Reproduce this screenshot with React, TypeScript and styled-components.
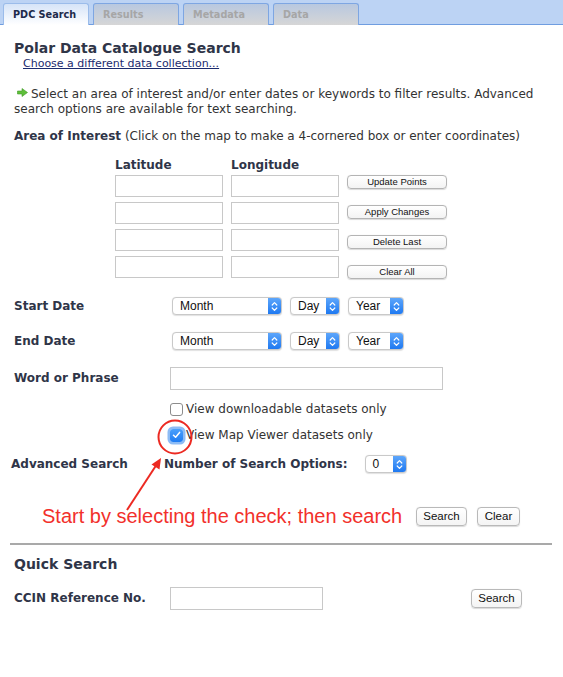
import React from "react";
import styled, { createGlobalStyle, css } from "styled-components";

const Global = createGlobalStyle`
  html, body { margin: 0; padding: 0; background: #fff; }
  body { font-family: "DejaVu Sans", Verdana, sans-serif; color: #333; }
  * { box-sizing: border-box; }
`;

const Page = styled.div`
  width: 563px;
  height: 677px;
  position: relative;
  overflow: hidden;
  background: #fff;
`;

const TabBar = styled.div`
  height: 25px;
  background: #bcd3f4;
  border-bottom: 1px solid #6f9de0;
  display: flex;
  align-items: flex-end;
  gap: 4px;
  padding-left: 3px;
`;

const Tab = styled.div<{ $active?: boolean }>`
  width: 86px;
  height: 22px;
  margin-bottom: -1px;
  border: 1px solid #7ea6e2;
  border-bottom: none;
  border-radius: 3px 3px 0 0;
  font-size: 9.7px;
  font-weight: bold;
  display: flex;
  align-items: center;
  padding-left: 9px;
  ${(p) =>
    p.$active
      ? css`
          background: linear-gradient(#d6e4f8, #ffffff);
          color: #1d2a4a;
          border-color: #9bbcea;
        `
      : css`
          background: linear-gradient(#b8c8e0, #d6d6d6);
          color: #a6a6a6;
        `}
`;

const Content = styled.div`
  padding: 0 0 0 14px;
  position: relative;
`;

const Title = styled.h1`
  margin: 14px 0 0 0;
  font-size: 14px;
  line-height: 18px;
  font-weight: bold;
  color: #2f3548;
`;

const Link = styled.a`
  display: block;
  margin-left: 9px;
  font-size: 11px;
  line-height: 14px;
  color: #1b2b6e;
  text-decoration: underline;
`;

const Intro = styled.p`
  margin: 16px 0 0 0;
  font-size: 12px;
  line-height: 15px;
  color: #333;
  padding-right: 10px;
`;

const GreenArrow = styled.svg`
  width: 11px;
  height: 9px;
  margin: 0 3px 0 3px;
  vertical-align: 1px;
`;

const AreaLine = styled.div`
  margin-top: 12px;
  font-size: 12px;
  line-height: 15px;
  color: #333;
`;

const Bold = styled.b`
  color: #2f3548;
`;

const AreaBlock = styled.div`
  margin: 21px 0 0 101px;
  display: flex;
  gap: 8px;
`;

const CoordCol = styled.div`
  display: flex;
  flex-direction: column;
  gap: 5px;
  width: 108px;
`;

const ColHead = styled.div`
  font-size: 12px;
  font-weight: bold;
  color: #2f3548;
  line-height: 15px;
  height: 10px;
  margin-top: -7px;
  margin-bottom: 2px;
`;

const TextBox = styled.div<{ $w: number; $h?: number }>`
  width: ${(p) => p.$w}px;
  height: ${(p) => p.$h ?? 22}px;
  border: 1px solid #c8c8c8;
  background: #fff;
  flex-shrink: 0;
`;

const ButtonCol = styled.div`
  display: flex;
  flex-direction: column;
  gap: 16px;
  padding-top: 10px;
`;

const SmallButton = styled.button`
  width: 100px;
  height: 14px;
  padding: 0;
  border: 1px solid #b4b4b4;
  border-radius: 4px;
  background: linear-gradient(#ffffff, #f3f3f3);
  box-shadow: 0 0.5px 1px rgba(0, 0, 0, 0.15);
  font-family: "Liberation Sans", Arial, sans-serif;
  font-size: 9.5px;
  color: #111;
  line-height: 12px;
`;

const Row = styled.div<{ $mt: number; $h?: number }>`
  margin-top: ${(p) => p.$mt}px;
  height: ${(p) => p.$h ?? 24}px;
  display: flex;
  align-items: center;
`;

const Label = styled.div<{ $w?: number; $shift?: number }>`
  width: ${(p) => p.$w ?? 158}px;
  margin-left: ${(p) => p.$shift ?? 0}px;
  flex-shrink: 0;
  font-size: 12px;
  font-weight: bold;
  color: #2f3548;
`;

const SelectBox = styled.div<{ $w: number; $ml?: number }>`
  width: ${(p) => p.$w}px;
  margin-left: ${(p) => p.$ml ?? 0}px;
  height: 18px;
  border: 1px solid #c9c9c9;
  border-radius: 4px;
  background: #fff;
  box-shadow: 0 0.5px 1px rgba(0, 0, 0, 0.12);
  display: flex;
  align-items: stretch;
  overflow: hidden;
  font-family: "Liberation Sans", Arial, sans-serif;
  font-size: 12px;
  color: #111;
  flex-shrink: 0;
`;

const SelectText = styled.span`
  flex: 1;
  padding-left: 7px;
  line-height: 16px;
`;

const SelectKnob = styled.span`
  width: 13px;
  background: linear-gradient(#5da6fb, #1f79f1);
  display: flex;
  align-items: center;
  justify-content: center;
`;

const Selects = styled.div`
  display: flex;
  gap: 8px;
`;

const CheckRow = styled.label`
  display: flex;
  align-items: center;
  gap: 3px;
  margin-left: 156px;
  font-size: 12px;
  color: #333;
`;

const Box = styled.span<{ $checked?: boolean }>`
  width: 13px;
  height: 13px;
  border-radius: 3px;
  display: flex;
  align-items: center;
  justify-content: center;
  ${(p) =>
    p.$checked
      ? css`
          background: linear-gradient(#4aa0fc, #1f7cf2);
          box-shadow: 0 0 0 2.5px #8dbcf5;
        `
      : css`
          background: #fff;
          border: 1px solid #8c8c8c;
        `}
`;

const Sub = styled.div`
  display: flex;
  align-items: center;
  font-size: 12px;
  font-weight: bold;
  color: #2f3548;
`;

const Note = styled.div`
  font-family: "Liberation Sans", Arial, sans-serif;
  font-size: 20px;
  color: #f2302b;
  margin-left: 28px;
  width: 374px;
  flex-shrink: 0;
`;

const PushButton = styled.button<{ $w: number; $ml?: number }>`
  width: ${(p) => p.$w}px;
  margin-left: ${(p) => p.$ml ?? 0}px;
  height: 19px;
  padding: 0;
  border: 1px solid #b9b9b9;
  border-radius: 4px;
  background: linear-gradient(#fff, #f4f4f4);
  box-shadow: 0 0.5px 1px rgba(0, 0, 0, 0.15);
  font-family: "Liberation Sans", Arial, sans-serif;
  font-size: 11.5px;
  color: #111;
  flex-shrink: 0;
`;

const Rule = styled.hr`
  margin: 15px 11px 0 -4px;
  border: none;
  border-top: 2px solid #a9a9a9;
  height: 0;
`;

const SectionTitle = styled.h2`
  margin: 10px 0 0 0;
  font-size: 14px;
  line-height: 18px;
  font-weight: bold;
  color: #2f3548;
`;

const Overlay = styled.svg`
  position: absolute;
  left: 0;
  top: 0;
  pointer-events: none;
`;

const Chevrons = () => (
  <svg width="7" height="11" viewBox="0 0 7 11">
    <path d="M1.2 4 L3.5 1.7 L5.8 4 M1.2 7 L3.5 9.3 L5.8 7" fill="none" stroke="#fff" strokeWidth="1.2" strokeLinecap="round" strokeLinejoin="round" />
  </svg>
);

const Select = ({ w, text, ml }: { w: number; text: string; ml?: number }) => (
  <SelectBox $w={w} $ml={ml}>
    <SelectText>{text}</SelectText>
    <SelectKnob>
      <Chevrons />
    </SelectKnob>
  </SelectBox>
);

const DateSelects = () => (
  <Selects>
    <Select w={110} text="Month" />
    <Select w={50} text="Day" />
    <Select w={56} text="Year" />
  </Selects>
);

export default function App() {
  const rows = [0, 1, 2, 3];
  return (
    <Page>
      <Global />
      <TabBar>
        <Tab $active>PDC Search</Tab>
        <Tab>Results</Tab>
        <Tab>Metadata</Tab>
        <Tab>Data</Tab>
      </TabBar>
      <Content>
        <Title>Polar Data Catalogue Search</Title>
        <Link href="#">Choose a different data collection...</Link>
        <Intro>
          <GreenArrow viewBox="0 0 11 9">
            <path d="M0.5 3 H5 V0.5 L10.5 4.5 L5 8.5 V6 H0.5 Z" fill="#5fbf3a" stroke="#3f9a25" strokeWidth="0.6" />
          </GreenArrow>
          Select an area of interest and/or enter dates or keywords to filter results. Advanced search options are available for text searching.
        </Intro>
        <AreaLine>
          <Bold>Area of Interest</Bold> (Click on the map to make a 4-cornered box or enter coordinates)
        </AreaLine>
        <AreaBlock>
          <CoordCol>
            <ColHead>Latitude</ColHead>
            {rows.map((r) => (
              <TextBox key={r} $w={108} />
            ))}
          </CoordCol>
          <CoordCol>
            <ColHead>Longitude</ColHead>
            {rows.map((r) => (
              <TextBox key={r} $w={108} />
            ))}
          </CoordCol>
          <ButtonCol>
            <SmallButton>Update Points</SmallButton>
            <SmallButton>Apply Changes</SmallButton>
            <SmallButton>Delete Last</SmallButton>
            <SmallButton>Clear All</SmallButton>
          </ButtonCol>
        </AreaBlock>

        <Row $mt={15}>
          <Label>Start Date</Label>
          <DateSelects />
        </Row>
        <Row $mt={11}>
          <Label>End Date</Label>
          <DateSelects />
        </Row>
        <Row $mt={13}>
          <Label $w={156}>Word or Phrase</Label>
          <TextBox $w={273} $h={23} />
        </Row>
        <Row $mt={9} $h={20}>
          <CheckRow>
            <Box />
            View downloadable datasets only
          </CheckRow>
        </Row>
        <Row $mt={6} $h={20}>
          <CheckRow>
            <Box $checked>
              <svg width="9" height="8" viewBox="0 0 9 8">
                <path d="M1.5 4.2 L3.6 6.2 L7.6 1.4" fill="none" stroke="#fff" strokeWidth="1.5" strokeLinecap="round" strokeLinejoin="round" />
              </svg>
            </Box>
            View Map Viewer datasets only
          </CheckRow>
        </Row>
        <Row $mt={7}>
          <Label $w={153} $shift={-3}>Advanced Search</Label>
          <Sub>Number of Search Options:</Sub>
          <Select w={42} text="0" ml={17} />
        </Row>
        <Row $mt={28}>
          <Note>Start by selecting the check; then search</Note>
          <PushButton $w={51}>Search</PushButton>
          <PushButton $w={43} $ml={10}>Clear</PushButton>
        </Row>
        <Rule />
        <SectionTitle>Quick Search</SectionTitle>
        <Row $mt={13}>
          <Label $w={156}>CCIN Reference No.</Label>
          <TextBox $w={153} $h={23} />
          <PushButton $w={51} $ml={148}>Search</PushButton>
        </Row>
      </Content>
      <Overlay width="563" height="677" viewBox="0 0 563 677">
        <circle cx="175" cy="437" r="16.5" fill="none" stroke="#ec2a22" strokeWidth="2" />
        <line x1="127" y1="510" x2="157" y2="464" stroke="#ec2a22" strokeWidth="2" />
        <path d="M161 458 L151.5 464.5 L159.5 469.5 Z" fill="#ec2a22" />
      </Overlay>
    </Page>
  );
}
